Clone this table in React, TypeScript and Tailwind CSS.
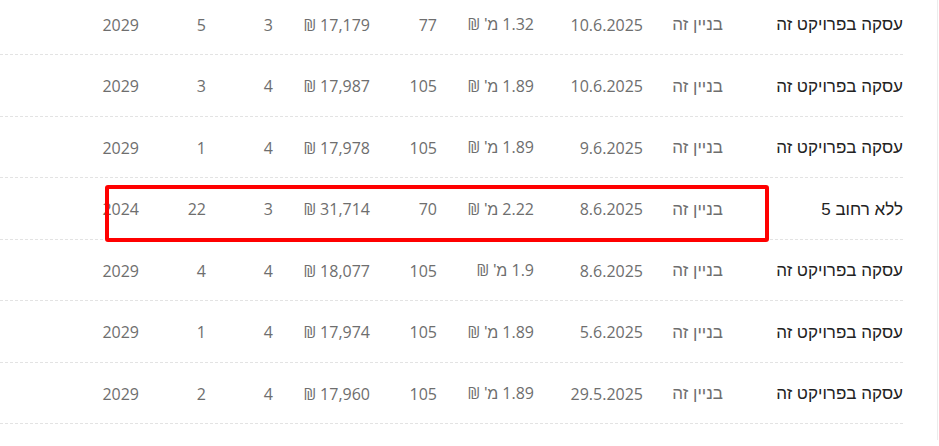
import React from 'react';

const rows = [
  { addr: 'עסקה בפרויקט זה', date: '10.6.2025', price: '1.32', area: '77', ppm: '17,179', rooms: '3', floor: '5', year: '2029' },
  { addr: 'עסקה בפרויקט זה', date: '10.6.2025', price: '1.89', area: '105', ppm: '17,987', rooms: '4', floor: '3', year: '2029' },
  { addr: 'עסקה בפרויקט זה', date: '9.6.2025', price: '1.89', area: '105', ppm: '17,978', rooms: '4', floor: '1', year: '2029' },
  { addr: 'ללא רחוב 5', date: '8.6.2025', price: '2.22', area: '70', ppm: '31,714', rooms: '3', floor: '22', year: '2024', marked: true },
  { addr: 'עסקה בפרויקט זה', date: '8.6.2025', price: '1.9', area: '105', ppm: '18,077', rooms: '4', floor: '4', year: '2029' },
  { addr: 'עסקה בפרויקט זה', date: '5.6.2025', price: '1.89', area: '105', ppm: '17,974', rooms: '4', floor: '1', year: '2029' },
  { addr: 'עסקה בפרויקט זה', date: '29.5.2025', price: '1.89', area: '105', ppm: '17,960', rooms: '4', floor: '2', year: '2029' },
];

const heb = { fontFamily: '"Liberation Sans", Arial, sans-serif' };

export default function App() {
  return (
    <div className="w-[939px] h-[446px] overflow-hidden bg-white" style={{ fontFamily: '"Open Sans", "Noto Sans", sans-serif' }}>
      <div className="w-[938px] h-full border-r border-[#ececec]">
        <div dir="rtl" className="w-[903px] -mt-[6.5px] text-[16px] text-[#6e6e6e]">
          {rows.map((r, i) => (
            <div key={i} className="relative flex items-center h-[61.5px] pt-[2px] border-b border-dashed border-[#e3e3e3]">
              <div className="w-[180px] shrink-0 text-[17px] text-[#222]" style={heb}>{r.addr}</div>
              <div className="w-[80px] shrink-0 text-[17px]" style={heb}>בניין זה</div>
              <div className="w-[109px] shrink-0">{r.date}</div>
              <div className="w-[97px] shrink-0">{r.price} <span style={heb}>מ'</span> ₪</div>
              <div className="w-[67px] shrink-0">{r.area}</div>
              <div className="w-[97px] shrink-0">{r.ppm} ₪</div>
              <div className="w-[67px] shrink-0">{r.rooms}</div>
              <div className="w-[67px] shrink-0">{r.floor}</div>
              <div className="w-[139px] shrink-0">{r.year}</div>
              {r.marked && (
                <div className="absolute top-[7px] left-[105px] w-[664px] h-[57px] border-4 border-[#ff0000] rounded-[3px] pointer-events-none" />
              )}
            </div>
          ))}
        </div>
      </div>
    </div>
  );
}
